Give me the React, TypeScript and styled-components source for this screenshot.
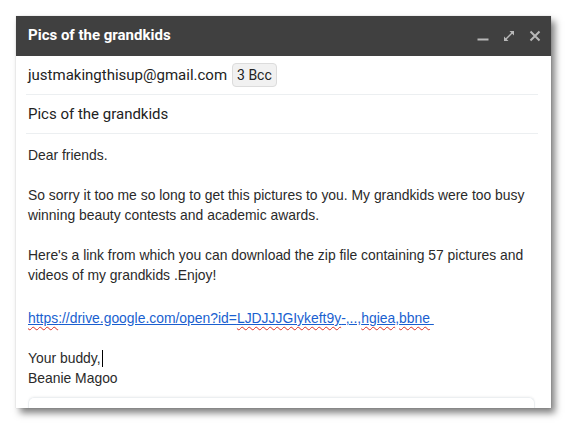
import React from "react";
import styled, { createGlobalStyle } from "styled-components";

const Global = createGlobalStyle`
  html, body { margin: 0; padding: 0; background: #ffffff; }
  body { width: 567px; height: 424px; overflow: hidden; }
`;

const Page = styled.div`
  padding: 16px 0 0 16px;
`;

const Window = styled.div`
  width: 535px;
  height: 392px;
  background: #fff;
  display: flex;
  flex-direction: column;
  overflow: hidden;
  box-shadow: 4px 5px 7px rgba(0, 0, 0, 0.5), 0 0 1px rgba(0, 0, 0, 0.2);
`;

const Header = styled.div`
  height: 40px;
  flex: none;
  background: #404040;
  display: flex;
  align-items: center;
  padding: 0 10px 2px 12px;
  box-sizing: border-box;
`;

const Title = styled.div`
  flex: 1;
  color: #fff;
  font-family: Roboto, "Liberation Sans", sans-serif;
  font-weight: 700;
  font-size: 15px;
`;

const Controls = styled.div`
  display: flex;
  align-items: center;
  gap: 14px;
  padding-top: 2px;
`;

const Ctl = styled.svg`
  width: 12px;
  height: 12px;
  display: block;
`;

const Content = styled.div`
  flex: 1;
  display: flex;
  flex-direction: column;
  padding: 0 13px 0 10px;
  min-height: 0;
`;

const Row = styled.div<{ $h: number }>`
  height: ${(p) => p.$h}px;
  flex: none;
  display: flex;
  align-items: center;
  gap: 5px;
  border-bottom: 1px solid #eceff1;
  padding-left: 2px;
  font-family: Roboto, "Liberation Sans", sans-serif;
  font-size: 15px;
  color: #222;
`;

const Chip = styled.span`
  display: inline-flex;
  align-items: center;
  height: 22px;
  padding: 0 4px;
  background: #f1f1f1;
  border: 1px solid #dcdcdc;
  border-radius: 4px;
  font-size: 14px;
  color: #222;
`;

const Body = styled.div`
  padding: 11px 0 0 2px;
  font-family: "Liberation Sans", Arial, sans-serif;
  font-size: 13.9px;
  line-height: 20px;
  color: #2a2a2a;
  flex: 1;
`;

const Line = styled.div<{ $top?: number }>`
  min-height: 20px;
  padding-top: ${(p) => p.$top ?? 0}px;
`;

const Link = styled.a`
  color: #1a5fd0;
  text-decoration: underline;
  text-decoration-color: #1a5fd0;
`;

const Spell = styled.span`
  text-decoration: underline wavy #d93025;
  text-decoration-thickness: 1px;
  text-underline-offset: 3px;
`;

const Caret = styled.span`
  display: inline-block;
  width: 1px;
  height: 17px;
  background: #000;
  vertical-align: -4px;
  margin-left: 1px;
`;

const Toolbar = styled.div`
  flex: none;
  height: 20px;
  margin: 9px 3px 0 2px;
  border: 1px solid #eceff1;
  border-bottom: none;
  border-radius: 6px 6px 0 0;
  box-shadow: 0 -1px 2px rgba(0, 0, 0, 0.04);
`;

export default function App() {
  return (
    <>
      <Global />
      <Page>
        <Window>
          <Header>
            <Title>Pics of the grandkids</Title>
            <Controls>
              <Ctl viewBox="0 0 12 12">
                <rect x="0.5" y="8.5" width="11" height="2" fill="#b8b8b8" />
              </Ctl>
              <Ctl viewBox="0 0 12 12">
                <path d="M6.5 1h4.5v4.5z M5.5 11H1V6.5z" fill="#b8b8b8" />
                <path d="M9.5 2.5L2.5 9.5" stroke="#b8b8b8" strokeWidth="1.3" fill="none" />
              </Ctl>
              <Ctl viewBox="0 0 12 12">
                <path d="M1.5 1.5l9 9M10.5 1.5l-9 9" stroke="#b8b8b8" strokeWidth="2" fill="none" />
              </Ctl>
            </Controls>
          </Header>
          <Content>
            <Row $h={38}>
              <span>justmakingthisup@gmail.com</span>
              <Chip>3 Bcc</Chip>
            </Row>
            <Row $h={38}>Pics of the grandkids</Row>
            <Body>
              <Line>Dear friends.</Line>
              <Line />
              <Line>So sorry it too me so long to get this pictures to you. My grandkids were too busy</Line>
              <Line>winning beauty contests and academic awards.</Line>
              <Line />
              <Line>Here's a link from which you can download the zip file containing 57 pictures and</Line>
              <Line>videos of my grandkids .Enjoy!</Line>
              <Line />
              <Line $top={3}>
                <Link href="#">
                  <Spell>https</Spell>://drive.google.com/open?id=<Spell>LJDJJJGIykeft9y</Spell>-,..,<Spell>hgiea</Spell>,<Spell>bbne</Spell>&nbsp;
                </Link>
              </Line>
              <Line />
              <Line>
                Your buddy,<Caret />
              </Line>
              <Line>Beanie Magoo</Line>
            </Body>
            <Toolbar />
          </Content>
        </Window>
      </Page>
    </>
  );
}
